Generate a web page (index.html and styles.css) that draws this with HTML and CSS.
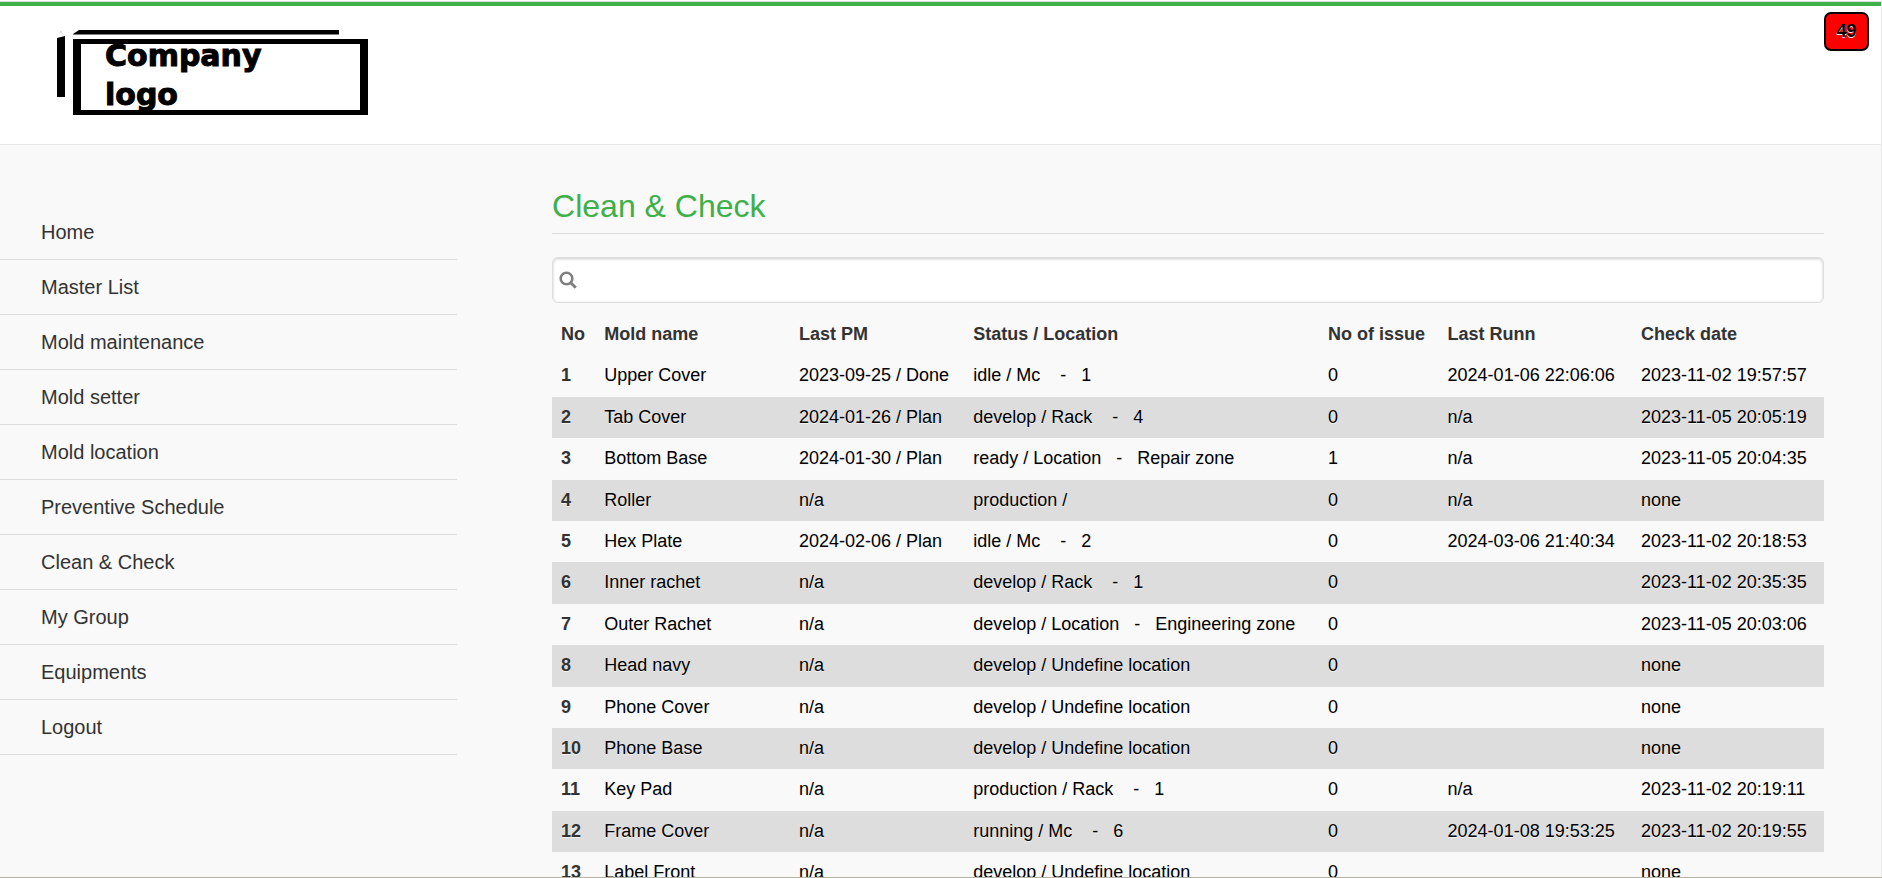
FILE: index.html
```
<!DOCTYPE html>
<html lang="en">
<head>
<meta charset="utf-8">
<title>Clean &amp; Check</title>
<link rel="stylesheet" href="styles.css">
</head>
<body>
<div class="page">
<header class="header">
<a class="logo" href="#" aria-label="Company logo">
<svg width="312" height="88" viewBox="0 0 312 88">
<path d="M16 6L22 2H282V6.500H16Z"/>
<path d="M0 10L8 8V69H0Z"/>
<rect x="20" y="13.500" width="287" height="71" fill="#fff" stroke="#000" stroke-width="5"/>
<path d="M16 11h8v76h-8zM303 11h8v76h-8z"/>
<circle cx="4" cy="4" r="1" fill="#ccc"/>
<text x="48" y="38">Company</text>
<text x="48" y="77">logo</text>
</svg>
</a>
<button class="badge" type="button">49</button>
</header>
<div class="content">
<nav class="nav">
<a href="#">Home</a>
<a href="#">Master List</a>
<a href="#">Mold maintenance</a>
<a href="#">Mold setter</a>
<a href="#">Mold location</a>
<a href="#">Preventive Schedule</a>
<a href="#">Clean &amp; Check</a>
<a href="#">My Group</a>
<a href="#">Equipments</a>
<a href="#">Logout</a>
</nav>
<main class="main">
<h1 class="title">Clean &amp; Check</h1>
<div class="search">
<svg class="search-icon" width="18" height="18" viewBox="0 0 18 18" fill="none" stroke="#808080"><circle cx="7.500" cy="7.500" r="5.800" stroke-width="2.600"/><path d="M11.500 11.500L16.800 16.800" stroke-width="3"/></svg>
<input class="search-input" type="text" aria-label="Search">
</div>
<table class="table">
<colgroup><col class="c-no"><col class="c-name"><col class="c-pm"><col class="c-status"><col class="c-issue"><col class="c-run"><col class="c-check"></colgroup>
<thead><tr><th>No</th><th>Mold name</th><th>Last PM</th><th>Status / Location</th><th>No of issue</th><th>Last Runn</th><th>Check date</th></tr></thead>
<tbody>
<tr><th>1</th><td>Upper Cover</td><td>2023-09-25 / Done</td><td>idle / Mc &nbsp;&nbsp; - &nbsp; 1</td><td>0</td><td>2024-01-06 22:06:06</td><td>2023-11-02 19:57:57</td></tr>
<tr><th>2</th><td>Tab Cover</td><td>2024-01-26 / Plan</td><td>develop / Rack &nbsp;&nbsp; - &nbsp; 4</td><td>0</td><td>n/a</td><td>2023-11-05 20:05:19</td></tr>
<tr><th>3</th><td>Bottom Base</td><td>2024-01-30 / Plan</td><td>ready / Location &nbsp; - &nbsp; Repair zone</td><td>1</td><td>n/a</td><td>2023-11-05 20:04:35</td></tr>
<tr><th>4</th><td>Roller</td><td>n/a</td><td>production /</td><td>0</td><td>n/a</td><td>none</td></tr>
<tr><th>5</th><td>Hex Plate</td><td>2024-02-06 / Plan</td><td>idle / Mc &nbsp;&nbsp; - &nbsp; 2</td><td>0</td><td>2024-03-06 21:40:34</td><td>2023-11-02 20:18:53</td></tr>
<tr><th>6</th><td>Inner rachet</td><td>n/a</td><td>develop / Rack &nbsp;&nbsp; - &nbsp; 1</td><td>0</td><td></td><td>2023-11-02 20:35:35</td></tr>
<tr><th>7</th><td>Outer Rachet</td><td>n/a</td><td>develop / Location &nbsp; - &nbsp; Engineering zone</td><td>0</td><td></td><td>2023-11-05 20:03:06</td></tr>
<tr><th>8</th><td>Head navy</td><td>n/a</td><td>develop / Undefine location</td><td>0</td><td></td><td>none</td></tr>
<tr><th>9</th><td>Phone Cover</td><td>n/a</td><td>develop / Undefine location</td><td>0</td><td></td><td>none</td></tr>
<tr><th>10</th><td>Phone Base</td><td>n/a</td><td>develop / Undefine location</td><td>0</td><td></td><td>none</td></tr>
<tr><th>11</th><td>Key Pad</td><td>n/a</td><td>production / Rack &nbsp;&nbsp; - &nbsp; 1</td><td>0</td><td>n/a</td><td>2023-11-02 20:19:11</td></tr>
<tr><th>12</th><td>Frame Cover</td><td>n/a</td><td>running / Mc &nbsp;&nbsp; - &nbsp; 6</td><td>0</td><td>2024-01-08 19:53:25</td><td>2023-11-02 20:19:55</td></tr>
<tr><th>13</th><td>Label Front</td><td>n/a</td><td>develop / Undefine location</td><td>0</td><td></td><td>none</td></tr>
</tbody>
</table>
</main>
</div>
</div>
</body>
</html>
```
FILE: styles.css
```
* { box-sizing: border-box; }
body {
  margin: 0;
  height: 100vh;
  overflow: hidden;
  background: #f9f9f9;
  border-top: 1px solid #fff;
  border-bottom: 1px solid #b3b5a0;
  font-family: "Liberation Sans", Arial, sans-serif;
  font-size: 18px;
  line-height: 1.3;
  color: #333;
  text-shadow: 0 1px 0 #f3f3f3;
}
.page {
  height: 100%;
  overflow: hidden;
  border-top: 1px solid #ddd;
  border-right: 1px solid #e8e8e8;
}
.header {
  display: flex;
  justify-content: space-between;
  align-items: flex-start;
  background: #fff;
  border-top: 4px solid #3eb049;
  border-bottom: 1px solid #e8e8e8;
  padding: 6px 12px 28px 57px;
}
.logo { padding-top: 16px; }
.logo svg { display: block; }
.logo text {
  font-family: "DejaVu Sans", sans-serif;
  font-weight: bold;
  font-size: 30px;
  stroke: #000;
  stroke-width: 1px;
  text-shadow: none;
}
.badge {
  width: 45px;
  height: 39px;
  padding: 0;
  background: #f00;
  border: 2px solid #000;
  border-radius: 7px;
  font-family: inherit;
  font-size: 18px;
  font-weight: bold;
  color: #000;
  text-shadow: 0 1px 0 #f3f3f3;
}
.content {
  display: flex;
  align-items: flex-start;
}
.nav {
  width: 24.3%;
  padding-top: 60px;
}
.nav a {
  display: block;
  padding: 14px 41px;
  line-height: 26px;
  border-bottom: 1px solid #ddd;
  font-size: 20px;
  color: #333;
  text-decoration: none;
}
.main {
  flex: 1;
  padding: 40px 57px 0 95px;
}
.title {
  margin: 0 0 23px;
  padding-bottom: 6px;
  border-bottom: 1px solid #ddd;
  font-size: 32px;
  font-weight: normal;
  line-height: 42px;
  color: #3eb049;
}
.search {
  display: flex;
  align-items: center;
  height: 46px;
  margin-bottom: 11px;
  padding-left: 6px;
  background: #fff;
  border: 1px solid #ddd;
  border-radius: 6px;
  box-shadow: inset 0 1px 3px rgba(0, 0, 0, 0.2);
}
.search-input {
  flex: 1;
  height: 100%;
  border: 0;
  background: transparent;
  font: inherit;
  outline: none;
}
.table {
  width: 100%;
  border-collapse: collapse;
}
.table th, .table td {
  padding: 9px;
  text-align: left;
  white-space: nowrap;
}
.table td { color: #000; }
.table tbody tr:nth-child(even) { background: #ddd; }
.c-no { width: 3.4%; }
.c-name { width: 15.3%; }
.c-pm { width: 13.7%; }
.c-status { width: 27.9%; }
.c-issue { width: 9.4%; }
.c-run { width: 15.2%; }
.c-check { width: 15.1%; }
```
